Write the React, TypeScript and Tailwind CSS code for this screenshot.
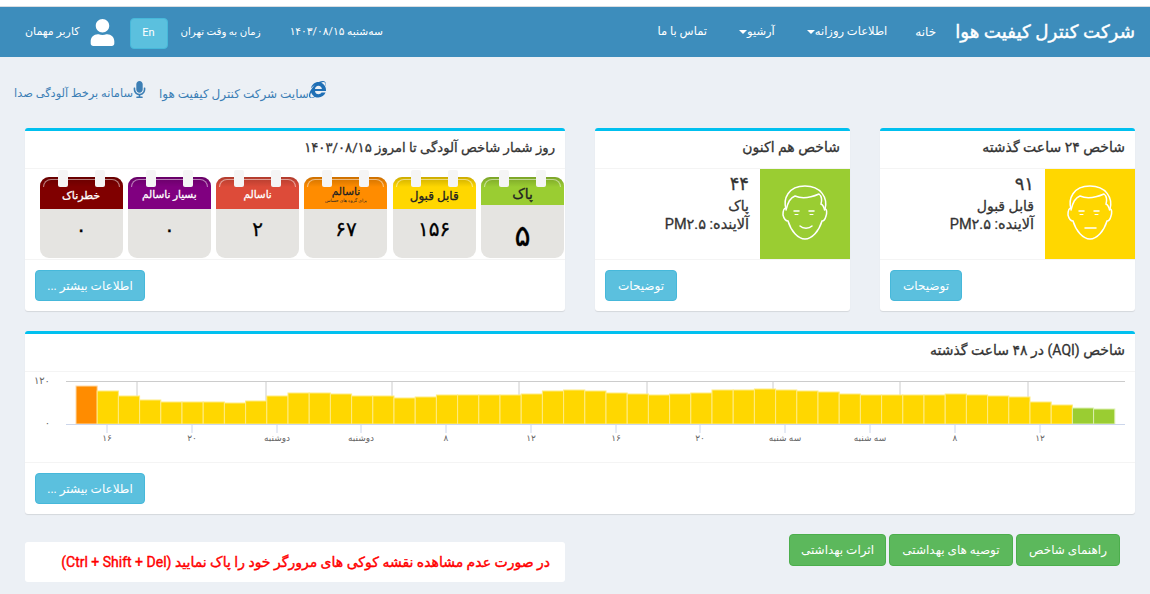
import { FaInternetExplorer, FaMicrophone, FaUser } from "react-icons/fa";

const fontStack = "font-['Roboto','DejaVu_Sans',sans-serif]";
const medium = "[-webkit-text-stroke:0.3px]";

const bars = [
  38, 33, 28, 24, 22, 22, 22, 21, 23, 28, 31, 31, 30, 28, 28, 26, 27, 29, 29, 29, 29, 30, 33, 34, 33, 31, 30, 29, 30, 31,
  34, 34, 35, 34, 33, 32, 30, 29, 29, 29, 29, 30, 29, 28, 27, 22, 19, 16, 15,
];

const gridLines = [112, 241, 367, 494, 622, 748, 875, 1003];

const ticks = [
  { x: 82, label: "۱۶" },
  { x: 167, label: "۲۰" },
  { x: 252, label: "دوشنبه" },
  { x: 336, label: "دوشنبه" },
  { x: 421, label: "۸" },
  { x: 506, label: "۱۲" },
  { x: 591, label: "۱۶" },
  { x: 675, label: "۲۰" },
  { x: 760, label: "سه شنبه" },
  { x: 845, label: "سه شنبه" },
  { x: 930, label: "۸" },
  { x: 1015, label: "۱۲" },
];

function Face({ smile }: { smile?: boolean }) {
  return (
    <svg width="90" height="90" viewBox="0 0 90 90" fill="none" stroke="#fff" strokeWidth="1.5" strokeLinecap="round">
      <path d="M26 40C23 30 28 17 45 17C61 17 68 29 65 40C67 40 67 44 66 47C65 51 63 52 62 52C59 62 52 70 45 70C38 70 31 62 28 52C26 52 24 50 23 46C23 42 24 39 26 39Z" />
      <path d="M26 41C28 33 30 29 35 27C42 30 52 28 59 25C62 27 62 32 61 35C63 36 64 38 64.5 41" />
      <path d="M34 42H39M49 42H54" />
      <path d="M35 45.5H38M50 45.5H53" strokeWidth="1" />
      {smile ? <path d="M40 57C43 60 49 60 52 57" /> : <path d="M40 59H51" />}
    </svg>
  );
}

function Calendar({
  title,
  sub,
  value,
  head,
  dark,
  titleClass,
  valueClass,
}: {
  title: string;
  sub?: string;
  value: string;
  head: string;
  dark?: boolean;
  titleClass: string;
  valueClass: string;
}) {
  return (
    <div className="relative w-[83px] h-[81px] rounded-[9px] bg-[#e5e4e1] flex flex-col">
      <div className={`relative h-[32px] pt-[5px] rounded-t-[9px] flex flex-col items-center justify-center ${head}`}>
        <div className="absolute inset-x-0 top-0 h-[10px] rounded-t-[9px] bg-gradient-to-b from-black/20 to-transparent" />
        <div className="absolute inset-x-[3px] top-[2px] h-[8px] rounded-t-[8px] border-t border-x border-white/50" />
        <span className={`relative leading-none ${medium} ${dark ? "text-[#222]" : "text-white"} ${titleClass}`}>{title}</span>
        {sub && <span className="relative text-[4.5px] leading-[7px] text-[#222]">{sub}</span>}
      </div>
      <div className={`flex-1 flex justify-center text-black ${medium} ${valueClass}`}>{value}</div>
      <span className="absolute left-[18px] -top-[7px] w-[10px] h-[17px] rounded-[2px] bg-[#f5f5f5]" />
      <span className="absolute left-[55px] -top-[7px] w-[10px] h-[17px] rounded-[2px] bg-[#f5f5f5]" />
    </div>
  );
}

function InfoButton({ children, width }: { children: string; width: string }) {
  return (
    <button className={`h-[31px] rounded-[4px] bg-[#5bc0de] border border-[#46b8da] text-white text-[12px] ${width}`}>{children}</button>
  );
}

function CardTitle({ children, size = "text-[14px]" }: { children: string; size?: string }) {
  return (
    <div className={`h-[38px] px-[10px] pb-[4px] flex items-center border-b border-[#f4f4f4] text-[#333] ${size} ${medium}`}>{children}</div>
  );
}

function AqiCard({ title, value, label, face, smile }: { title: string; value: string; label: string; face: string; smile?: boolean }) {
  return (
    <div className="w-[255px] h-[183px] bg-white rounded-[3px] border-t-[3px] border-[#00c0ef] shadow-[0_1px_1px_rgba(0,0,0,0.1)] flex flex-col">
      <CardTitle>{title}</CardTitle>
      <div className="h-[91px] flex border-b border-[#f4f4f4]">
        <div className={`w-[90px] flex items-center justify-center ${face}`}>
          <Face smile={smile} />
        </div>
        <div className={`pr-[11px] pt-[4px] text-[#333] ${medium}`}>
          <div className="text-[18px] leading-[22px]">{value}</div>
          <div className="text-[14px] leading-[22px]">{label}</div>
          <div className="text-[14.5px] leading-[16px]">آلاینده: PM۲.۵</div>
        </div>
      </div>
      <div className="flex-1 px-[10px] pt-[10px] flex justify-end">
        <InfoButton width="w-[72px] text-[12.5px]">توضیحات</InfoButton>
      </div>
    </div>
  );
}

export default function App() {
  return (
    <div dir="rtl" className={`min-h-screen bg-[#ecf0f5] ${fontStack}`}>
      <div className="h-[7px] bg-white border-b border-[#d8dde2]" />

      <header className="h-[50px] bg-[#3d8dbc] text-white flex items-center justify-between pr-[15px] pl-[25px]">
        <div className="flex items-center">
          <span className="text-[18.3px] [-webkit-text-stroke:0.4px] whitespace-nowrap">شرکت کنترل کیفیت هوا</span>
          <nav className="flex items-center text-[11.5px] mr-[19px] whitespace-nowrap">
            <a className="text-[12px]">خانه</a>
            <a className="mr-[28px] flex items-center">
              اطلاعات روزانه
              <span className="border-x-[4px] border-x-transparent border-t-[4px] border-t-white" />
            </a>
            <a className="mr-[32px] flex items-center">
              آرشیو
              <span className="border-x-[4px] border-x-transparent border-t-[4px] border-t-white" />
            </a>
            <a className="mr-[32px]">تماس با ما</a>
          </nav>
        </div>
        <div className="flex items-center whitespace-nowrap">
          <span className="text-[10.7px]">سه‌شنبه ۱۴۰۳/۰۸/۱۵</span>
          <span className="mr-[29px] text-[10.2px]">زمان به وقت تهران</span>
          <button className="mr-[13px] mt-[3px] w-[38px] h-[31px] rounded-[4px] bg-[#5bc0de] border border-[#46b8da] text-[11px]">En</button>
          <FaUser className="mr-[15px] w-[25px] h-[27px]" />
          <span className="mr-[10px] text-[11px]">کاربر مهمان</span>
        </div>
      </header>

      <div className="h-[71px] pt-[23px] pl-[14px] flex justify-end">
        <div className="flex items-start text-[#3c7fb5] whitespace-nowrap">
          <a className="flex items-start text-[12px]">
            <FaInternetExplorer className="w-[17px] h-[17px] mt-[1px] text-[#1f6fb5]" />
            <span className="mt-[5px]">سایت شرکت کنترل کیفیت هوا</span>
          </a>
          <a className="flex items-start mr-[13px] text-[11.4px]">
            <FaMicrophone className="w-[13px] h-[17px] mt-[1px] text-[#3c7fb5]" />
            <span className="mt-[5px]">سامانه برخط آلودگی صدا</span>
          </a>
        </div>
      </div>

      <div className="pr-[15px] pl-[25px]">
        <div className="flex gap-[30px]">
          <AqiCard title="شاخص ۲۴ ساعت گذشته" value="۹۱" label="قابل قبول" face="bg-[#ffd700]" />
          <AqiCard title="شاخص هم اکنون" value="۴۴" label="پاک" face="bg-[#9acd32]" smile />

          <div className="w-[540px] h-[183px] bg-white rounded-[3px] border-t-[3px] border-[#00c0ef] shadow-[0_1px_1px_rgba(0,0,0,0.1)] flex flex-col">
            <CardTitle size="text-[13.2px]">روز شمار شاخص آلودگی تا امروز ۱۴۰۳/۰۸/۱۵</CardTitle>
            <div className="h-[91px] pt-[8px] pr-[1px] flex gap-[5.3px] border-b border-[#f4f4f4]">
              <Calendar title="پاک" value="۵" head="bg-[#9acd32]" dark titleClass="text-[14px]" valueClass="text-[30px] pt-[8px]" />
              <Calendar title="قابل قبول" value="۱۵۶" head="bg-[#ffd700]" dark titleClass="text-[12px]" valueClass="text-[20px] pt-[5px]" />
              <Calendar title="ناسالم" sub="برای گروه های حساس" value="۶۷" head="bg-[#ff8c00]" dark titleClass="text-[10.5px]" valueClass="text-[20px] pt-[5px]" />
              <Calendar title="ناسالم" value="۲" head="bg-[#dd4b39]" titleClass="text-[10.5px]" valueClass="text-[20px] pt-[5px]" />
              <Calendar title="بسیار ناسالم" value="۰" head="bg-[#800080]" titleClass="text-[10.5px]" valueClass="text-[20px] pt-[5px]" />
              <Calendar title="خطرناک" value="۰" head="bg-[#800000]" titleClass="text-[11px]" valueClass="text-[20px] pt-[5px]" />
            </div>
            <div className="flex-1 px-[10px] pt-[10px] flex justify-end">
              <InfoButton width="w-[110px]">اطلاعات بیشتر ...</InfoButton>
            </div>
          </div>
        </div>

        <div className="mt-[20px] h-[183px] bg-white rounded-[3px] border-t-[3px] border-[#00c0ef] shadow-[0_1px_1px_rgba(0,0,0,0.1)] flex flex-col">
          <CardTitle>شاخص (AQI) در ۴۸ ساعت گذشته</CardTitle>
          <div className="h-[91px] border-b border-[#f4f4f4]">
            <svg width="1110" height="90" viewBox="0 0 1110 90" direction="ltr" fontFamily="Roboto, 'DejaVu Sans', sans-serif" fontSize="9" fill="#666">
              <line x1="41" x2="1100" y1="9.5" y2="9.5" stroke="#ccc" />
              {gridLines.map((x) => (
                <line key={x} x1={x} x2={x} y1="9" y2="52" stroke="#ccc" />
              ))}
              {bars.map((h, i) => (
                <rect
                  key={i}
                  x={51 + i * 21.2}
                  y={52 - h}
                  width="21.2"
                  height={h}
                  fill={i === 0 ? "#ff8c00" : i >= 47 ? "#9acd32" : "#ffd700"}
                  stroke={i === 0 ? "#ffd9a8" : i >= 47 ? "#dcefb0" : "#ffeb80"}
                />
              ))}
              <line x1="41" x2="1100" y1="52.5" y2="52.5" stroke="#ccd6eb" />
              {ticks.map((t) => (
                <g key={t.x}>
                  <line x1={t.x} x2={t.x} y1="53" y2="61" stroke="#ccd6eb" />
                  <text x={t.x} y="69" textAnchor="middle">{t.label}</text>
                </g>
              ))}
              <text x="25" y="12" textAnchor="end" fontSize="10">۱۲۰</text>
              <text x="25" y="54" textAnchor="end" fontSize="10">۰</text>
            </svg>
          </div>
          <div className="flex-1 px-[10px] pt-[10px] flex justify-end">
            <InfoButton width="w-[110px]">اطلاعات بیشتر ...</InfoButton>
          </div>
        </div>

        <div className="mt-[20px] flex justify-between items-start">
          <div className="flex gap-[3px] mr-[15px]">
            <button className="h-[32px] w-[104px] rounded-[4px] bg-[#5cb85c] border border-[#4cae4c] text-white text-[12px]">راهنمای شاخص</button>
            <button className="h-[32px] w-[124px] rounded-[4px] bg-[#5cb85c] border border-[#4cae4c] text-white text-[12px]">توصیه های بهداشتی</button>
            <button className="h-[32px] w-[97px] rounded-[4px] bg-[#5cb85c] border border-[#4cae4c] text-white text-[12px]">اثرات بهداشتی</button>
          </div>
          <div className="mt-[8px] w-[540px] h-[40px] bg-white rounded-[3px] pr-[15px] flex items-center text-[14px] text-[#ff0000] whitespace-nowrap [-webkit-text-stroke:0.4px]">
            در صورت عدم مشاهده نقشه کوکی های مرورگر خود را پاک نمایید (Ctrl + Shift + Del)
          </div>
        </div>
      </div>
    </div>
  );
}
